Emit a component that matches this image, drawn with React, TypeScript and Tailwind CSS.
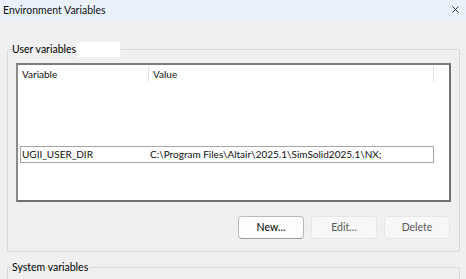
import { X } from 'lucide-react';

const font = { fontFamily: 'Lato, "Noto Sans", sans-serif' };

const GroupBox = ({ label, children, masked }: { label: string; children?: React.ReactNode; masked?: boolean }) => (
  <fieldset className="border border-[#d7d7d7] rounded-[2px] px-[8px]">
    <legend className="-ml-[5px] px-[1px] flex items-center h-[16px] leading-[16px] text-[10.5px] text-black">
      <span>{label}</span>
      {masked && <span className="inline-block w-[43px] h-[15px] bg-white ml-[1px]" />}
    </legend>
    {children}
  </fieldset>
);

export default function App() {
  return (
    <div className="w-[466px] h-[279px] overflow-hidden bg-[#f0f0f0] text-[10px] text-[#111]" style={font}>
      {/* Title bar */}
      <div className="h-[21px] bg-[#eaf1fb] flex items-center justify-between pl-[3px] pr-[5px]">
        <span className="text-[10.5px] leading-none -mt-[1px]">Environment Variables</span>
        <X size={11} strokeWidth={2} className="text-[#1b2533] -mt-[3px]" />
      </div>

      <div className="px-[7px] pt-[20px] pr-[6px] flex flex-col gap-[7px]">
        <GroupBox label="User variables" masked>
          <div className="mt-[6px] h-[139px] bg-white border-2 border-t-[#7d7d7d] border-l-[#8a8a8a] border-r-[#6f6f6f] border-b-[#707070] pl-[2px] pr-[15px]">
            <div className="flex h-[18px] items-center">
              <div className="w-[129px] pl-[2px] border-r border-[#e3e3e3] h-[16px] leading-[16px]">Variable</div>
              <div className="flex-1 pl-[4px] border-r border-[#e3e3e3] h-[16px] leading-[16px]">Value</div>
            </div>
            <div className="mt-[63px] h-[17px] flex items-center border border-[#a5a5a5] bg-white">
              <div className="w-[128px] pl-[1px] leading-[15px]">UGII_USER_DIR</div>
              <div className="flex-1 pl-[1px] leading-[15px] whitespace-nowrap">C:\Program Files\Altair\2025.1\SimSolid2025.1\NX;</div>
            </div>
          </div>
          <div className="flex justify-end gap-[7px] mt-[14px] mb-[12px] pr-[1px]">
            <button className="w-[66px] h-[23px] rounded-[4px] border border-[#b9b9b9] border-b-[#9c9c9c] bg-[#fdfdfd] text-[10.5px] text-black">New...</button>
            <button className="w-[66px] h-[23px] rounded-[4px] border border-[#e6e6e6] bg-[#f7f7f7] text-[10.5px] text-[#5a5a5a]">Edit...</button>
            <button className="w-[66px] h-[23px] rounded-[4px] border border-[#e6e6e6] bg-[#f7f7f7] text-[10.5px] text-[#5a5a5a]">Delete</button>
          </div>
        </GroupBox>
        <GroupBox label="System variables">
          <div className="h-[40px]" />
        </GroupBox>
      </div>
    </div>
  );
}
